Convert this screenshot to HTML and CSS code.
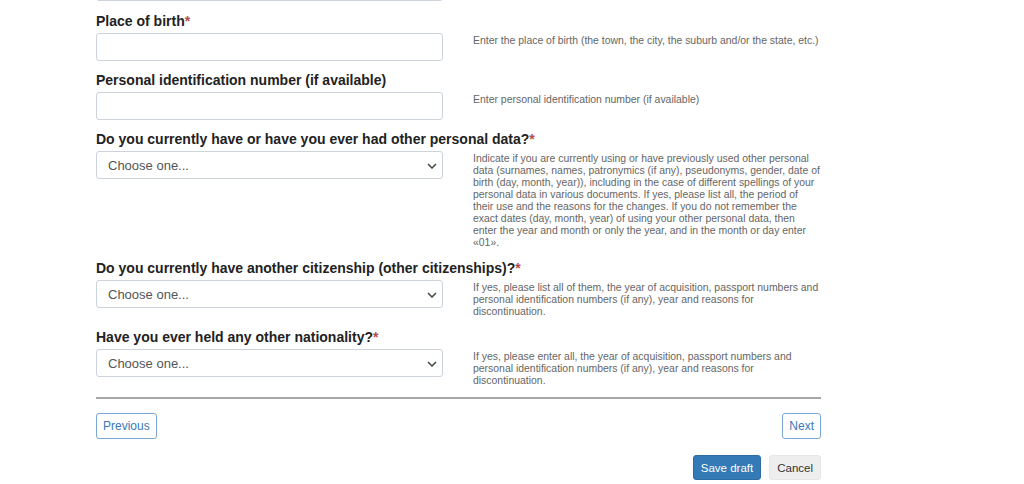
FILE: index.html
```html
<!DOCTYPE html>
<html lang="en">
<head>
<meta charset="utf-8">
<title>Form</title>
<link rel="stylesheet" href="styles.css">
</head>
<body>
<div class="page">
  <div class="prev-field"><div class="box"></div></div>

  <div class="field">
    <div class="label">Place of birth<span class="req">*</span></div>
    <div class="row">
      <div class="control"><div class="box"></div></div>
      <div class="help">Enter the place of birth (the town, the city, the suburb and/or the state, etc.)</div>
    </div>
  </div>

  <div class="field">
    <div class="label">Personal identification number (if available)</div>
    <div class="row">
      <div class="control"><div class="box"></div></div>
      <div class="help">Enter personal identification number (if available)</div>
    </div>
  </div>

  <div class="field">
    <div class="label">Do you currently have or have you ever had other personal data?<span class="req">*</span></div>
    <div class="row">
      <div class="control"><div class="box select"><span>Choose one...</span><svg class="chev" width="10" height="6" viewBox="0 0 10 6"><path d="M1 1 L5 5 L9 1" fill="none" stroke="#444" stroke-width="1.5"/></svg></div></div>
      <div class="help">Indicate if you are currently using or have previously used other personal data (surnames, names, patronymics (if any), pseudonyms, gender, date of birth (day, month, year)), including in the case of different spellings of your personal data in various documents. If yes, please list all, the period of their use and the reasons for the changes. If you do not remember the exact dates (day, month, year) of using your other personal data, then enter the year and month or only the year, and in the month or day enter «01».</div>
    </div>
  </div>

  <div class="field">
    <div class="label">Do you currently have another citizenship (other citizenships)?<span class="req">*</span></div>
    <div class="row">
      <div class="control"><div class="box select"><span>Choose one...</span><svg class="chev" width="10" height="6" viewBox="0 0 10 6"><path d="M1 1 L5 5 L9 1" fill="none" stroke="#444" stroke-width="1.5"/></svg></div></div>
      <div class="help">If yes, please list all of them, the year of acquisition, passport numbers and personal identification numbers (if any), year and reasons for discontinuation.</div>
    </div>
  </div>

  <div class="field">
    <div class="label">Have you ever held any other nationality?<span class="req">*</span></div>
    <div class="row">
      <div class="control"><div class="box select"><span>Choose one...</span><svg class="chev" width="10" height="6" viewBox="0 0 10 6"><path d="M1 1 L5 5 L9 1" fill="none" stroke="#444" stroke-width="1.5"/></svg></div></div>
      <div class="help">If yes, please enter all, the year of acquisition, passport numbers and personal identification numbers (if any), year and reasons for discontinuation.</div>
    </div>
  </div>

  <hr class="divider">

  <div class="nav">
    <button class="btn-outline">Previous</button>
    <button class="btn-outline">Next</button>
  </div>

  <div class="actions">
    <button class="btn-primary">Save draft</button>
    <button class="btn-default">Cancel</button>
  </div>
</div>
</body>
</html>
```

FILE: styles.css
```css
* { box-sizing: border-box; }
html, body { margin: 0; padding: 0; background: #fff; }
body {
  font-family: "Liberation Sans", Arial, sans-serif;
  color: #222;
}
.page {
  width: 725px;
  margin-left: 96px;
}
.prev-field { height: 1px; overflow: hidden; width: 347px; margin-bottom: 10px; }
.prev-field .box { margin-top: -27px; }
.field { margin-bottom: 9px; }
.label {
  font-size: 14px;
  font-weight: bold;
  line-height: 20px;
  margin-bottom: 2px;
  color: #222;
}
.req { color: #b94a48; }
.row {
  display: grid;
  grid-template-columns: 347px 1fr;
  column-gap: 30px;
}
.box {
  height: 28px;
  border: 1px solid #ccd3da;
  border-radius: 3px;
  background: #fff;
}
.select {
  display: flex;
  align-items: center;
  justify-content: space-between;
  padding: 0 5px 0 11px;
  font-size: 13px;
  color: #555;
}
.chev { margin-top: 1px; }
.help {
  font-size: 10.45px;
  line-height: 12px;
  color: #666;
  padding-top: 2px;
}
.divider {
  border: 0;
  border-top: 2px solid #a6a6a6;
  margin: 10px 0 14px;
  height: 0;
}
.nav {
  display: flex;
  justify-content: space-between;
}
button {
  font-family: "Liberation Sans", Arial, sans-serif;
  cursor: pointer;
}
.btn-outline {
  height: 26px;
  padding: 0 6px;
  background: #fff;
  border: 1px solid #7aa7d6;
  border-radius: 3px;
  color: #3a78b8;
  font-size: 12px;
}
.actions {
  display: flex;
  justify-content: flex-end;
  gap: 8px;
  margin-top: 16px;
}
.btn-primary {
  height: 25px;
  padding: 0 7px;
  background: #337ab7;
  border: 1px solid #2e6da4;
  border-radius: 3px;
  color: #fff;
  font-size: 11.5px;
}
.btn-default {
  height: 25px;
  padding: 0 7px;
  background: #eeeeee;
  border: 1px solid #e6e6e6;
  border-radius: 3px;
  color: #333;
  font-size: 11.5px;
}
```
